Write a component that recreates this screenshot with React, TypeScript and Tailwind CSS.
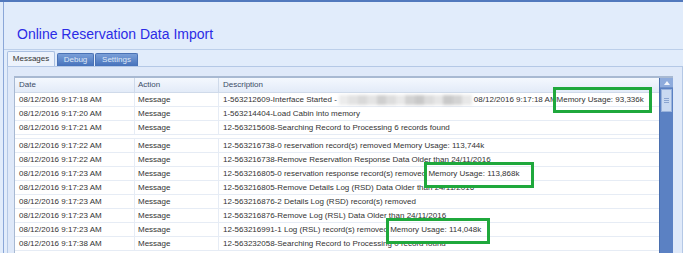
import React from 'react';

const rows = [
  { t: '9:17:18 AM', d: 'first' },
  { t: '9:17:20 AM', d: '1-563214404-Load Cabin into memory' },
  { t: '9:17:21 AM', d: '12-563215608-Searching Record to Processing 6 records found' },
  { t: '', d: 'gap' },
  { t: '9:17:22 AM', d: '12-563216738-0 reservation record(s) removed Memory Usage: 113,744k' },
  { t: '9:17:22 AM', d: '12-563216738-Remove Reservation Response Data Older than 24/11/2016' },
  { t: '9:17:23 AM', d: '12-563216805-0 reservation response record(s) removed ', mem: 'Memory Usage: 113,868k', box: 'w-[110px]' },
  { t: '9:17:23 AM', d: '12-563216805-Remove Details Log (RSD) Data Older than 24/11/2016' },
  { t: '9:17:23 AM', d: '12-563216876-2 Details Log (RSD) record(s) removed' },
  { t: '9:17:23 AM', d: '12-563216876-Remove Log (RSL) Data Older than 24/11/2016' },
  { t: '9:17:23 AM', d: '12-563216991-1 Log (RSL) record(s) removed ', mem: 'Memory Usage: 114,048k', box: 'w-[104px]' },
  { t: '9:17:38 AM', d: '12-563232058-Searching Record to Processing 0 record found' },
];

const blur = ['#ececec', '#e2e2e2', '#d9d9d9', '#e4e4e4', '#cfcfcf', '#dddddd', '#e9e9e9', '#d2d2d2', '#c8c8c8', '#dcdcdc', '#e6e6e6', '#c9c9c9', '#d3d3d3', '#e8e8e8'];

function MemBox({ text, box }: { text: string; box: string }) {
  return (
    <span className="relative">
      {text}
      <span className={`absolute -left-[4px] -top-[7px] h-[26px] border-[3px] border-[#1fa83c] ${box}`} />
    </span>
  );
}

function Desc({ d, mem, box }: { d: string; mem?: string; box?: string }) {
  if (d === 'first') {
    return (
      <span className="flex items-center whitespace-nowrap">
        <span>1-563212609-Interface Started - </span>
        <span className="flex h-[10px] w-[133px] blur-[1.5px] ml-[2px]">
          {blur.map((c, i) => (
            <span key={i} className="flex-1" style={{ background: c }} />
          ))}
        </span>
        <span className="ml-[2px]">08/12/2016 9:17:18 AM </span>
        <MemBox text="Memory Usage: 93,336k" box="w-[99px]" />
      </span>
    );
  }
  return (
    <span className="whitespace-nowrap">
      {d}
      {mem && box && <MemBox text={mem} box={box} />}
    </span>
  );
}

export default function App() {
  return (
    <div className="w-[683px] h-[253px] bg-[#e1ecfb] overflow-hidden flex flex-col font-['Liberation_Sans',sans-serif]">
      <div className="h-[2px] bg-[#5279bd]" />
      <div className="flex-1 flex pl-[3px]">
        <div className="flex-1 flex flex-col border-l border-[#8ba7d8]">
          <div className="h-[48px] border-b border-[#bccfea] pl-[13px] pt-[24px]">
            <h1 className="text-[14px] leading-[16px] text-[#2b2be6]">Online Reservation Data Import</h1>
          </div>
          <div className="flex items-end h-[16px] pl-[3px] gap-[1px]">
            <div className="h-[15px] w-[48px] rounded-t-[2px] border border-b-0 border-[#a9bfe0] bg-[#edf3fc] text-[8px] text-[#333] flex items-center justify-center">Messages</div>
            <div className="ml-[1px] h-[13px] w-[37px] rounded-t-[2px] border border-b-0 border-[#4a72b5] bg-gradient-to-b from-[#7a9fd8] to-[#4672bb] text-[8px] text-[#dfe8f7] flex items-center justify-center">Debug</div>
            <div className="h-[13px] w-[43px] rounded-t-[2px] border border-b-0 border-[#4a72b5] bg-gradient-to-b from-[#7a9fd8] to-[#4672bb] text-[8px] text-[#dfe8f7] flex items-center justify-center">Settings</div>
          </div>
          <div className="flex-1 ml-[3px] border border-b-0 border-[#b4c8e6] bg-[#dfe9f9] pt-[9px] pl-[6px] pr-[9px]">
            <div className="h-full border-t-2 border-l border-[#a8b9d2] flex bg-white">
              <div className="flex-1 text-[8px] text-[#333]">
                <div className="h-[15px] flex border-b border-[#cfdaea] bg-gradient-to-b from-[#f4f8fe] to-[#e3ebf8] text-[#3c4c66]">
                  <div className="w-[120px] pl-[4px] flex items-center border-r border-[#cfdaea]">Date</div>
                  <div className="w-[84px] pl-[3px] flex items-center border-r border-[#cfdaea]">Action</div>
                  <div className="flex-1 pl-[4px] flex items-center">Description</div>
                </div>
                {rows.map((r, i) =>
                  r.d === 'gap' ? (
                    <div key={i} className="h-[4px] border-b border-[#e6ecf5]" />
                  ) : (
                    <div key={i} className="h-[14px] flex border-b border-[#e6ecf5]">
                      <div className="w-[120px] pl-[4px] flex items-center border-r border-[#e6ecf5]">08/12/2016 {r.t}</div>
                      <div className="w-[84px] pl-[3px] flex items-center border-r border-[#e6ecf5]">Message</div>
                      <div className="flex-1 pl-[4px] flex items-center">
                        <Desc d={r.d} mem={r.mem} box={r.box} />
                      </div>
                    </div>
                  )
                )}
              </div>
              <div className="w-[14px] bg-[#5b81c3] border-l border-[#4a6fae] flex flex-col">
                <div className="h-[10px] bg-[#8eabdc] border-b border-[#6f90c8] flex items-center justify-center">
                  <svg width="6" height="4" viewBox="0 0 6 4"><path d="M0 4 L3 0 L6 4 Z" fill="#f2f6fc" /></svg>
                </div>
                <div className="mt-[1px] mx-[1px] h-[23px] bg-[#c9d9f1] border border-[#9ab3dc] flex flex-col items-center justify-center gap-[1px]">
                  <span className="w-[5px] h-[1px] bg-[#8aa4d0]" />
                  <span className="w-[5px] h-[1px] bg-[#8aa4d0]" />
                  <span className="w-[5px] h-[1px] bg-[#8aa4d0]" />
                </div>
              </div>
            </div>
          </div>
        </div>
      </div>
    </div>
  );
}
